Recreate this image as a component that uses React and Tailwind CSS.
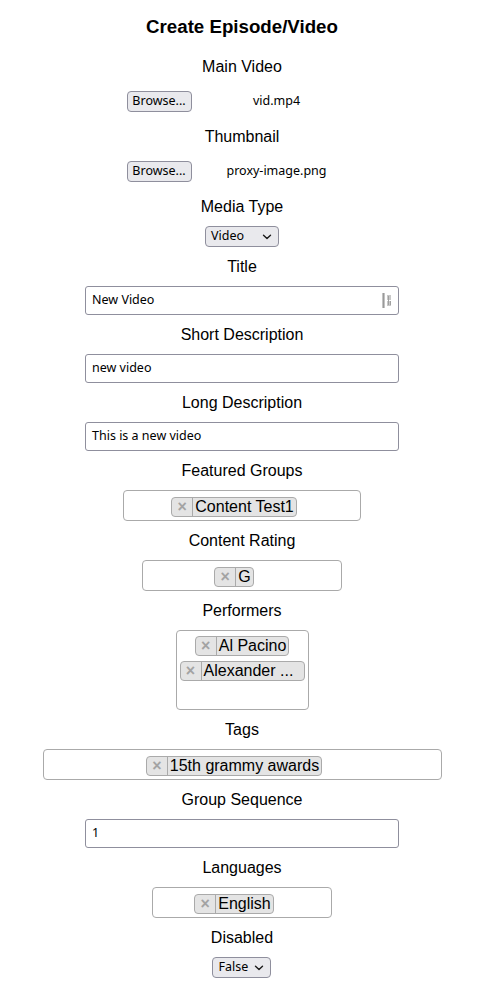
import React from "react";

const ui = "font-['Noto_Sans','Open_Sans',sans-serif]";

function Label({ children }) {
  return <div className="text-[16px] leading-[18px] text-black">{children}</div>;
}

function Field({ label, children }) {
  return (
    <div className="flex flex-col items-center gap-[10px]">
      <Label>{label}</Label>
      {children}
    </div>
  );
}

function FileRow({ name }) {
  return (
    <div className="h-[31px] flex items-center pl-[4px]">
      <button className={`${ui} h-[21px] w-[65px] rounded-[4px] border border-[#8f8f9d] bg-[#e9e9ed] text-[12.5px] leading-none text-black`}>
        Browse...
      </button>
      <span className={`${ui} w-[170px] text-center text-[12.5px] text-black`}>{name}</span>
    </div>
  );
}

function Chevron() {
  return (
    <svg width="10" height="6" viewBox="0 0 10 6" className="shrink-0">
      <path d="M1.5 1.2 L5 4.5 L8.5 1.2" fill="none" stroke="#1a1a1a" strokeWidth="1.4" strokeLinecap="round" strokeLinejoin="round" />
    </svg>
  );
}

function Select({ value, width }) {
  return (
    <div className={`${ui} ${width} h-[21px] flex items-center justify-between rounded-[4px] border border-[#8f8f9d] bg-[#e9e9ed] pl-[5px] pr-[6px] text-[12.5px] text-black`}>
      <span>{value}</span>
      <Chevron />
    </div>
  );
}

function TextInput({ value, icon }) {
  return (
    <div className={`${ui} w-[314px] h-[29px] flex items-center justify-between rounded-[3px] border border-[#8f8f9d] bg-white pl-[6px] pr-[6px] text-[12.5px] text-black`}>
      <span>{value}</span>
      {icon && (
        <svg width="10" height="15" viewBox="0 0 10 15">
          <rect x="0" y="0" width="3" height="15" fill="#c4c4c4" />
          <rect x="1" y="0" width="1" height="15" fill="#9a9a9a" />
          <rect x="5" y="2" width="4" height="5" fill="#c8c8c8" />
          <rect x="5" y="8" width="4" height="5" fill="#c8c8c8" />
          <rect x="6" y="3" width="1" height="9" fill="#a0a0a0" />
          <rect x="8" y="8" width="1" height="4" fill="#a0a0a0" />
        </svg>
      )}
    </div>
  );
}

function Chip({ children, width }) {
  return (
    <div className={`flex h-[20px] items-stretch rounded-[4px] border border-[#aaa] bg-[#e4e4e4] ${width || ""}`}>
      <span className="flex w-[21px] shrink-0 items-center justify-center border-r border-[#aaa] text-[16px] font-bold leading-none text-[#a3a3a3]">
        ×
      </span>
      <span className="truncate px-[2px] text-[16px] leading-[18px] text-black">{children}</span>
    </div>
  );
}

function Multi({ width, children }) {
  return (
    <div className={`${width} h-[31px] flex items-start justify-center rounded-[4px] border border-[#aaa] bg-white pt-[6px]`}>
      {children}
      <span className="w-[16px] shrink-0" />
    </div>
  );
}

export default function App() {
  return (
    <div className="w-[484px] bg-white font-['Liberation_Sans',Arial,sans-serif] text-black">
      <div className="flex flex-col items-center pt-[15px] pb-[8px]">
        <h1 className="text-[18.7px] font-bold leading-[24px]">Create Episode/Video</h1>
        <div className="mt-[19px] flex flex-col items-center gap-[11px]">
          <Field label="Main Video">
            <FileRow name="vid.mp4" />
          </Field>
          <Field label="Thumbnail">
            <FileRow name="proxy-image.png" />
          </Field>
          <Field label="Media Type">
            <Select value="Video" width="w-[74px]" />
          </Field>
          <Field label="Title">
            <TextInput value="New Video" icon />
          </Field>
          <Field label="Short Description">
            <TextInput value="new video" />
          </Field>
          <Field label="Long Description">
            <TextInput value="This is a new video" />
          </Field>
          <Field label="Featured Groups">
            <Multi width="w-[238px]">
              <Chip>Content Test1</Chip>
            </Multi>
          </Field>
          <Field label="Content Rating">
            <Multi width="w-[200px]">
              <Chip>G</Chip>
            </Multi>
          </Field>
          <Field label="Performers">
            <div className="w-[133px] h-[80px] flex flex-col items-center gap-[5px] rounded-[4px] border border-[#aaa] bg-white pt-[5px]">
              <Chip>Al Pacino</Chip>
              <Chip width="w-[125px]">Alexander ...</Chip>
            </div>
          </Field>
          <Field label="Tags">
            <Multi width="w-[399px]">
              <Chip>15th grammy awards</Chip>
            </Multi>
          </Field>
          <Field label="Group Sequence">
            <TextInput value="1" />
          </Field>
          <Field label="Languages">
            <Multi width="w-[180px]">
              <Chip>English</Chip>
            </Multi>
          </Field>
          <Field label="Disabled">
            <Select value="False" width="w-[59px]" />
          </Field>
        </div>
      </div>
    </div>
  );
}
